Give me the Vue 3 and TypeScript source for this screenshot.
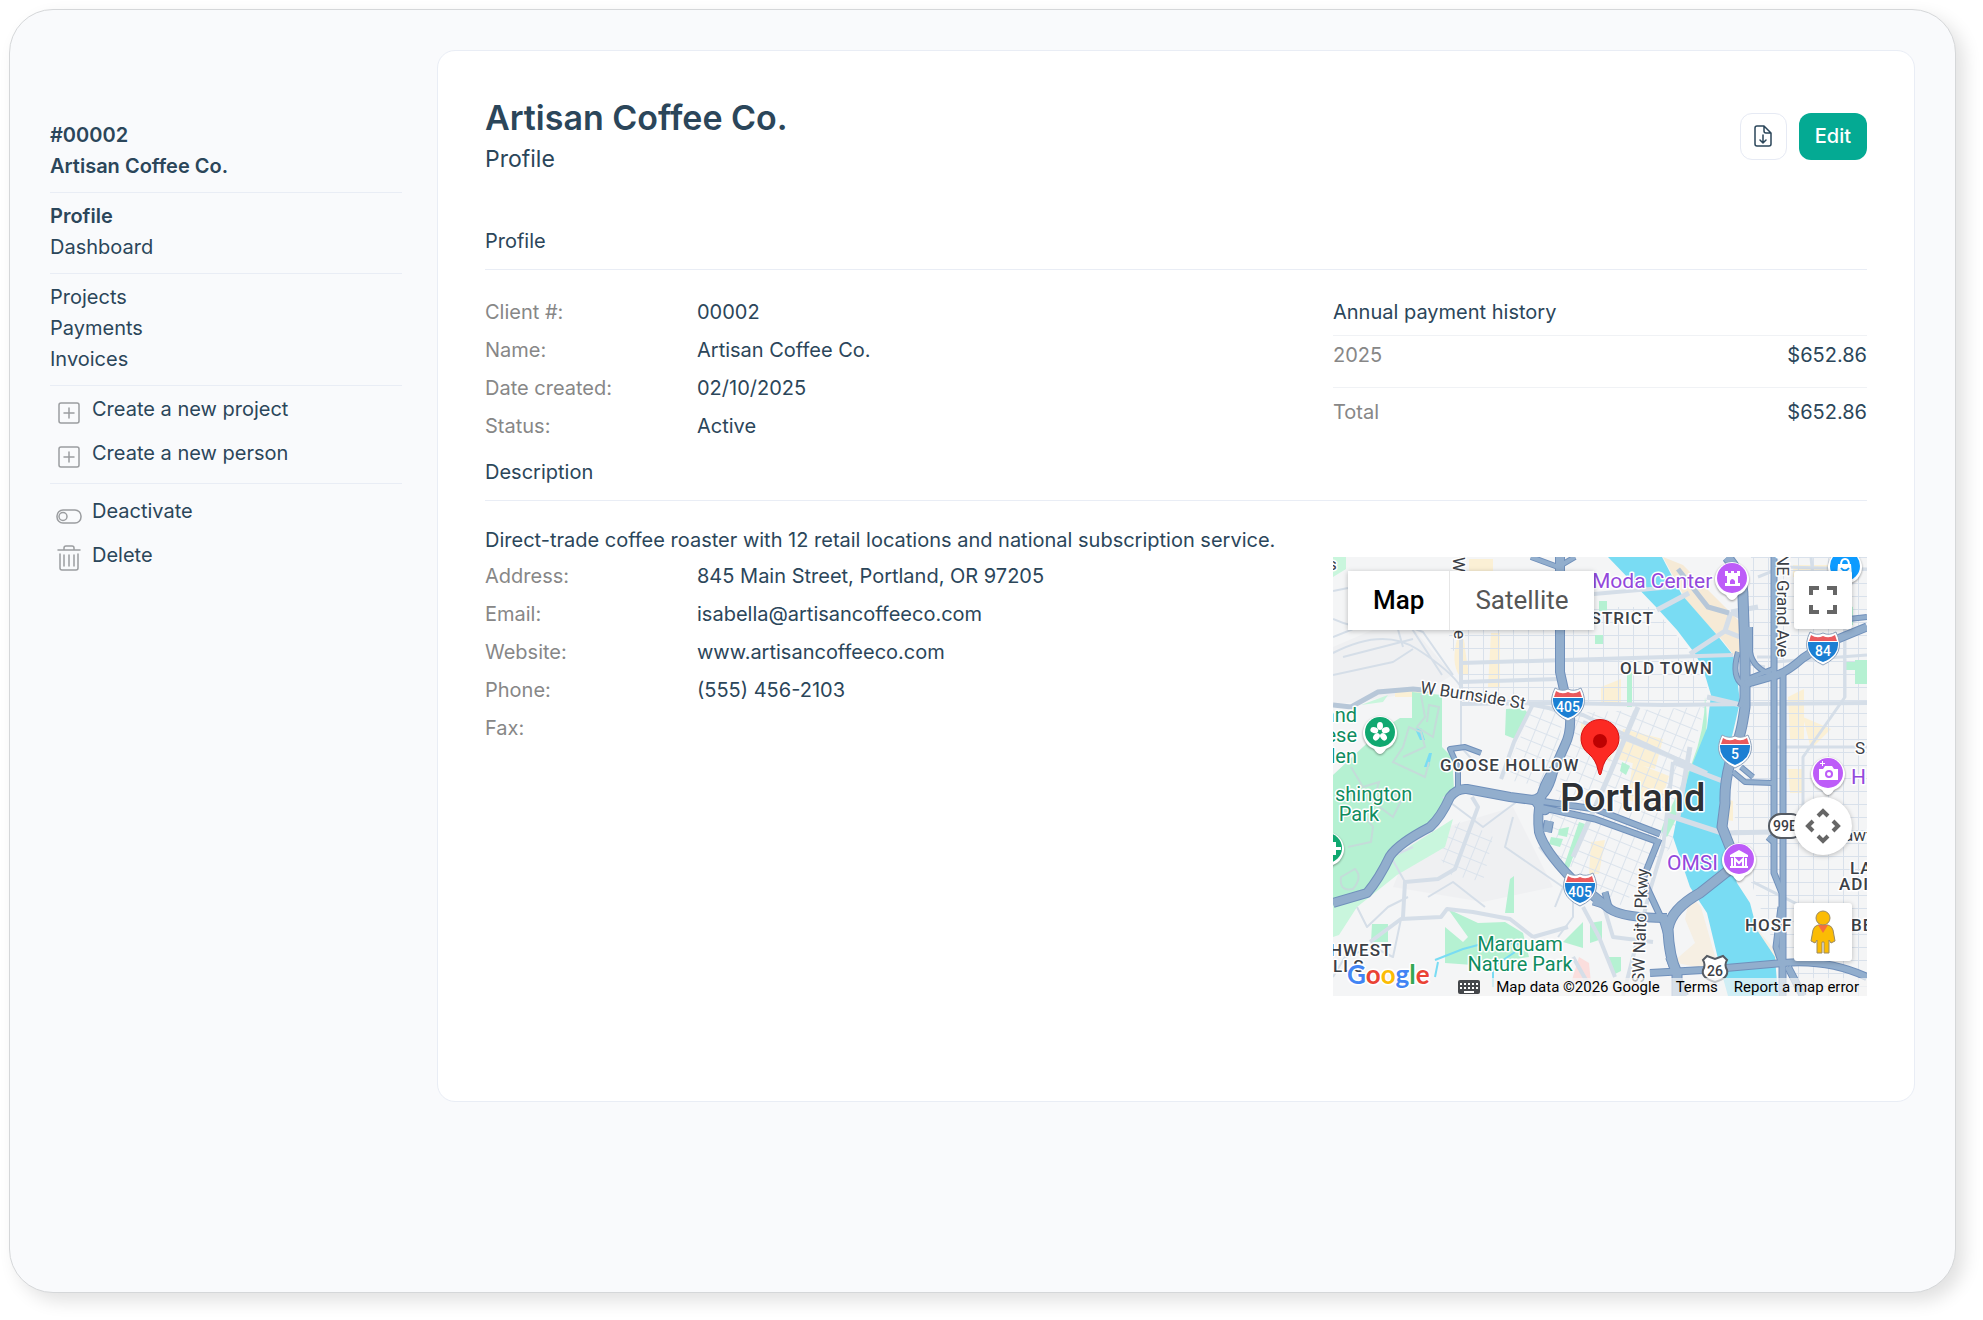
<script setup lang="ts">
interface Field {
  label: string
  value: string
}
interface Road {
  d: string
  w: number
}
interface Label {
  text: string
  x: number
  y: number
  kind: string
  anchor?: 'start' | 'middle' | 'end'
  rotate?: number
}

const profile: Field[] = [
  { label: 'Client #:', value: '00002' },
  { label: 'Name:', value: 'Artisan Coffee Co.' },
  { label: 'Date created:', value: '02/10/2025' },
  { label: 'Status:', value: 'Active' },
]
const contact: Field[] = [
  { label: 'Address:', value: '845 Main Street, Portland, OR 97205' },
  { label: 'Email:', value: 'isabella@artisancoffeeco.com' },
  { label: 'Website:', value: 'www.artisancoffeeco.com' },
  { label: 'Phone:', value: '(555) 456-2103' },
  { label: 'Fax:', value: '' },
]

/* Minor and arterial streets */
const streets: Road[] = [
  { d: 'M0 34L15 31M0 62Q40 80 70 58L109 118M0 96Q50 70 84 92T128 130L128 190L150 215', w: 2 },
  { d: 'M128 0V136M128 106L400 98M128 125L227 122M128 147L227 146L330 148L534 146', w: 4 },
  { d: 'M200 147L181 185L168 222M196 147L250 158L374 216M227 40L340 30', w: 4 },
  { d: 'M324 53L356 36M357 97L392 74L398 55M398 55L412 62L412 82L392 74M398 55L425 50', w: 5 },
  { d: 'M305 150L278 214L240 300M374 140L408 148M340 205L392 225', w: 5 },
  { d: 'M352 205L250 165M340 205L330 290L318 330L290 439', w: 4 },
  { d: 'M334 258L389 276L440 275M357 190L345 260', w: 5 },
  { d: 'M139 240L145 250L122 312L105 322L72 325L70 360M37 385L68 362L108 360L114 352L140 355L177 362L200 380L235 370', w: 4 },
  { d: 'M72 325L58 300L80 290M95 340L120 325L152 350M180 260L172 290L230 330L222 350M206 290L240 330L240 360L225 380', w: 2 },
  { d: 'M0 420L12 400L40 390L60 400L68 362M24 350L34 370L55 350L75 340M110 240L150 270L190 240', w: 2 },
  { d: 'M250 350L266 380L282 420M268 340L280 380L320 385M240 400L262 439', w: 4 },
  { d: 'M478 0L484 60L512 60V140L470 200V260M534 98L440 105M534 190H440', w: 3 },
  { d: 'M424 100L450 100M406 105L432 110M420 325L470 350M425 20L450 10L534 12', w: 3 },
  { d: 'M0 80L50 60L90 75L120 118M10 100L80 82M20 45L60 55L70 90M0 118L60 105L80 92', w: 2 },
]

const motorways: Road[] = [
  { d: 'M0 346L34 336Q46 322 57 299Q66 286 97 270Q108 260 117 240Q124 231 134 232L177 240L200 243Q214 240 220 215L232 188Q238 176 237 160L227 115V0', w: 8 },
  { d: 'M198 0L225 10L242 0M125 231V210L117 192L132 190L148 196', w: 4 },
  { d: 'M200 243L262 252L327 277M206 250L262 262L323 284M200 243Q212 262 216 250', w: 5 },
  { d: 'M220 214Q202 240 206 275Q211 293 238 321L277 352Q290 361 334 361M214 275L216 264', w: 8 },
  { d: 'M394 0Q410 18 410 40L412 95V150Q408 180 402 190Q391 220 392 246L389 270L397 290L405 306L367 336Q338 352 335 372Q336 400 344 416V439', w: 9 },
  { d: 'M417 70V95Q420 112 440 118M407 150L417 121L440 112M405 95Q398 120 410 128', w: 4 },
  { d: 'M412 127L440 119Q452 117 470 101L490 88L534 70', w: 7 },
  { d: 'M441 0V316L449 336V439', w: 5 },
  { d: 'M450 118V439M435 280L441 285M448 350L443 390L450 410', w: 5 },
  { d: 'M326 282L310 322L330 365L336 385M272 335L276 350L260 345', w: 5 },
  { d: 'M317 416L370 413L450 406Q495 402 534 420M455 410L470 439M336 400L352 439', w: 6 },
  { d: 'M400 215L412 225L440 226M408 210L420 220M534 60L516 62', w: 4 },
]

const labels: Label[] = [
  { text: 'Moda Center', x: 259, y: 31, kind: 'poi' },
  { text: 'OMSI', x: 334, y: 313, kind: 'poi' },
  { text: 'H', x: 518, y: 227, kind: 'poi' },
  { text: 'DISTRICT', x: 321, y: 67, kind: 'area', anchor: 'end' },
  { text: 'OLD TOWN', x: 287, y: 117, kind: 'area' },
  { text: 'GOOSE HOLLOW', x: 107, y: 214, kind: 'area' },
  { text: 'HOSF', x: 412, y: 374, kind: 'area' },
  { text: 'BE', x: 518, y: 374, kind: 'area' },
  { text: 'LA', x: 517, y: 317, kind: 'area' },
  { text: 'ADI', x: 506, y: 333, kind: 'area' },
  { text: 'HWEST', x: -3, y: 399, kind: 'area' },
  { text: 'LLS', x: 0, y: 415, kind: 'area' },
  { text: 'S', x: 522, y: 197, kind: 'street' },
  { text: 's', x: -5, y: 13, kind: 'street' },
  { text: 'awf', x: 511, y: 284, kind: 'street' },
  { text: 'and', x: 24, y: 165, kind: 'park', anchor: 'end' },
  { text: 'ese', x: 24, y: 185, kind: 'park', anchor: 'end' },
  { text: 'den', x: 24, y: 206, kind: 'park', anchor: 'end' },
  { text: 'shington', x: 2, y: 244, kind: 'park' },
  { text: 'Park', x: 26, y: 264, kind: 'park', anchor: 'middle' },
  { text: 'Marquam', x: 187, y: 394, kind: 'park', anchor: 'middle' },
  { text: 'Nature Park', x: 187, y: 414, kind: 'park', anchor: 'middle' },
  { text: 'W', x: 120, y: 0, kind: 'street', rotate: 90 },
  { text: 'e', x: 121, y: 73, kind: 'street', rotate: 90 },
  { text: 'NE Grand Ave', x: 444, y: -3, kind: 'street', rotate: 90 },
  { text: 'SW Naito Pkwy', x: 311, y: 426, kind: 'street', rotate: -88 },
  { text: 'Portland', x: 227, y: 254, kind: 'city' },
]

const shields = [
  { n: '405', x: 235, y: 146 },
  { n: '405', x: 247, y: 331 },
  { n: '84', x: 490, y: 90 },
  { n: '5', x: 402, y: 193 },
]
</script>

<template>
  <div class="shell">
    <aside class="sidebar">
      <div class="client">
        <strong>#00002</strong>
        <strong>Artisan Coffee Co.</strong>
      </div>
      <nav class="group">
        <a href="#profile" class="current">Profile</a>
        <a href="#dashboard">Dashboard</a>
      </nav>
      <nav class="group">
        <a href="#projects">Projects</a>
        <a href="#payments">Payments</a>
        <a href="#invoices">Invoices</a>
      </nav>
      <div class="group actions">
        <a v-for="item in ['project', 'person']" :key="item" href="#create" class="action">
          <svg class="icon" viewBox="0 0 26 30" aria-hidden="true">
            <rect x="3" y="6" width="20" height="20" rx="2" />
            <path d="M13 11v10M8 16h10" />
          </svg>
          <span>Create a new {{ item }}</span>
        </a>
      </div>
      <div class="group actions last">
        <button type="button" class="action">
          <svg class="icon" viewBox="0 0 26 30" aria-hidden="true">
            <rect x="1" y="11" width="24" height="13" rx="6" />
            <circle cx="7" cy="17.5" r="4" />
          </svg>
          <span>Deactivate</span>
        </button>
        <button type="button" class="action">
          <svg class="icon" viewBox="0 0 26 30" aria-hidden="true">
            <path d="M2 7h22M8 7V5q0-2 2-2h6q2 0 2 2v2M4 11v14q0 2 2 2h14q2 0 2-2V11M8 12v11M13 12v11M18 12v11" />
          </svg>
          <span>Delete</span>
        </button>
      </div>
    </aside>

    <main class="card">
      <header class="head">
        <div>
          <h1>Artisan Coffee Co.</h1>
          <p class="subtitle">Profile</p>
        </div>
        <div class="tools">
          <button type="button" class="btn export" aria-label="Download">
            <svg viewBox="0 0 18 22" width="18" height="22" aria-hidden="true">
              <path d="M10 1H3q-2 0-2 2v16q0 2 2 2h12q2 0 2-2V8L10 1v5q0 2 2 2h5M9 10v8M6 15l3 3 3-3" />
            </svg>
          </button>
          <button type="button" class="btn edit">Edit</button>
        </div>
      </header>

      <h2 class="first">Profile</h2>
      <div class="columns">
        <dl>
          <div v-for="f in profile" :key="f.label" class="row">
            <dt>{{ f.label }}</dt>
            <dd>{{ f.value }}</dd>
          </div>
        </dl>
        <table>
          <caption>Annual payment history</caption>
          <tbody>
            <tr class="year"><th scope="row">2025</th><td>$652.86</td></tr>
            <tr class="total"><th scope="row">Total</th><td>$652.86</td></tr>
          </tbody>
        </table>
      </div>

      <h2>Description</h2>
      <p class="description">Direct-trade coffee roaster with 12 retail locations and national subscription service.</p>
      <div class="columns">
        <dl>
          <div v-for="f in contact" :key="f.label" class="row">
            <dt>{{ f.label }}</dt>
            <dd>{{ f.value }}</dd>
          </div>
        </dl>

        <section class="map" aria-label="Map of Portland">
          <svg class="tiles" viewBox="0 0 534 439" preserveAspectRatio="xMidYMid slice">
            <defs>
              <pattern id="blocks" width="15" height="13" patternUnits="userSpaceOnUse">
                <path d="M0 0H15M0 0V13" stroke="#d9e1eb" stroke-width="2" />
              </pattern>
              <pattern id="tilted" width="12" height="12" patternUnits="userSpaceOnUse" patternTransform="rotate(22)">
                <path d="M0 0H12M0 0V12" stroke="#dbe3ec" stroke-width="2" />
              </pattern>
              <path id="burnside" d="M87 136Q130 142 190 152" />
            </defs>

            <rect width="534" height="439" fill="#f4f5f6" />
            <path d="M0 90L70 60L120 118L90 135L0 148ZM80 280L180 250L220 330L150 345L60 330Z" fill="#eff0f2" />

            <g fill="#fbf0d5">
              <path d="M136 2h24v24h-24zM124 82q8-6 8 10l4 26h-10q-8-12-2-36zM158 76h9v54h-12zM62 132h34v8h-34z" />
              <path d="M268 130l20-8v26h-20zM248 165l34 18-5 22-30-14zM290 172l40 10-8 30-38-10zM300 205l36 14-10 32-32-8zM258 285l14-2-6 34h-10z" />
              <path d="M455 140l16-8v50h-14zM470 160l28 12-20 20zM455 212h16v24h-14zM460 8h60v12h-60zM386 240l14 4v20l-12-2z" />
            </g>
            <path d="M330 0L350 8L410 68V110L390 84L354 45Z" fill="#f6ead6" />
            <path d="M357 338L368 350L388 420L372 412L340 405L362 386L352 362ZM424 372L446 398V410L428 395Z" fill="#f6efe3" />
            <path d="M246 400l10 6 2 20h-20z" fill="#fbdedd" />

            <path d="M116 60H226V146H128V100L116 90Z" fill="url(#blocks)" />
            <path d="M232 50H320L360 98L374 125V148H232Z" fill="url(#blocks)" />
            <path d="M418 0H534V439H460L416 320L400 280L412 150Z" fill="url(#blocks)" />
            <path d="M240 156L372 150L352 220L338 290L310 320L290 350L225 300L212 260L230 215Z" fill="url(#tilted)" />
            <path d="M200 150H232L225 190L212 230L170 222Z" fill="url(#tilted)" />
            <path d="M130 262L160 280L150 325L118 318L100 290Z" fill="url(#tilted)" />

            <g fill="#c9f6dd">
              <path d="M0 346L34 336L60 300L120 262L112 290L64 318L24 350L6 378L0 380Z" />
              <path d="M0 0H13V12L0 20ZM28 148L55 138L50 145Z" />
            </g>
            <g fill="#b5f1d2">
              <path d="M0 218L30 190L52 170L67 161H79V135L109 138V190L119 200L121 232L97 266L57 295L34 332L0 342Z" />
              <path d="M173 152L190 151L196 157L182 182L172 178ZM177 322l4-3v37h-9zM39 367h16v18h-17zM115 352L145 366L172 365L190 376L196 400L140 408L112 406V370L130 385L135 380Z" />
              <path d="M372 140Q378 180 364 212L354 230L344 260L334 280L328 274L332 262L352 222Q372 180 372 140ZM266 44h8v10h-8zM294 110h5v40h-5zM262 78h8v9h-8zM289 205l8 4-4 9-6-4zM226 272l10-2-2 10-9-2zM218 280l12 2-3 8-11-3zM246 265l6 2-16 44-5-2z" />
              <path d="M522 103h12v24h-12zM513 105h9v8h-9zM506 44l14 6v18h-10zM257 366l12-2v18l-12 4zM274 400l14 0 0 14-8 4zM250 365l-20 20 20 6z" />
            </g>
            <path d="M82 172l6-1 4 12-5 0zM96 196l3 0-3 14-5 0z" fill="#79dcf3" />
            <path d="M102 420L105 405M102 403L130 392L160 384L190 388M182 395L160 410V430" fill="none" stroke="#79dcf3" stroke-width="2" />
            <g fill="none" stroke="#c4dcd9" stroke-width="2">
              <path d="M88 138L92 160L84 170L100 180L106 150L96 148L94 165M70 200L92 190L88 175L76 170L70 190L60 205L92 220L96 205" />
              <path d="M18 210L30 230L46 225L40 245L60 260L70 240L55 235M15 290L38 285L40 270L32 260M8 320Q6 335 20 332Q30 320 22 312Z" />
            </g>

            <path
              d="M275 0H329L349 38L384 78L400 98L404 121L407 145L400 175L390 215L385 263L389 280L404 326L417 346L424 373L442 400L445 439H395L387 410L374 356L357 330L340 280L344 260L357 213L374 171L378 138L372 118L363 98L344 73L324 51Z"
              fill="#79dcf3"
            />

            <g fill="none" stroke="#d5dee8" stroke-linejoin="round">
              <path v-for="s in streets" :key="s.d" :d="s.d" :stroke-width="s.w" />
            </g>
            <path d="M0 148L18 150L45 135L80 132L100 134M345 12L375 50L396 56" fill="none" stroke="#b7c7d8" stroke-width="5" />
            <g fill="none" stroke="#7090bb" stroke-linejoin="round">
              <path v-for="r in motorways" :key="r.d" :d="r.d" :stroke-width="r.w + 2" />
            </g>
            <g fill="none" stroke="#92aecd" stroke-linejoin="round">
              <path v-for="r in motorways" :key="r.d" :d="r.d" :stroke-width="r.w" />
            </g>

            <g v-for="s in shields" :key="s.x" :transform="`translate(${s.x} ${s.y})`">
              <path d="M-13-15Q-6-11 0-14Q6-11 13-15Q24 7 0 18Q-24 7-13-15Z" fill="#fff" stroke="#8ea3bd" />
              <path d="M-15-5Q-16 9 0 15Q16 9 15-5Z" fill="#1b7fd3" />
              <path d="M-12-12Q-6-8 0-11Q6-8 12-12L14-6H-14Z" fill="#ea5a5e" />
              <text class="shield" y="9" text-anchor="middle">{{ s.n }}</text>
            </g>
            <rect x="436" y="257" width="34" height="24" rx="12" fill="#fff" stroke="#555b63" stroke-width="2" />
            <text x="440" y="274" class="route">99E</text>
            <path d="M370 403l4-4 8 3 8-3 4 4q-3 5 0 10 2 8-12 12-14-4-12-12 3-5 0-10z" fill="#fff" stroke="#555b63" stroke-width="2" />
            <text x="382" y="419" class="route" text-anchor="middle">26</text>

            <text
              v-for="l in labels"
              :key="l.text + l.x"
              :class="l.kind"
              :text-anchor="l.anchor ?? 'start'"
              :transform="`translate(${l.x} ${l.y}) rotate(${l.rotate ?? 0})`"
            >{{ l.text }}</text>
            <text class="street"><textPath href="#burnside">W Burnside St</textPath></text>

            <g v-for="p in [
              { x: 399, y: 21, c: '#bd5cf8' },
              { x: 512, y: 9, c: '#0d9bff' },
              { x: 406, y: 302, c: '#bd5cf8' },
              { x: 495, y: 216, c: '#bd5cf8' },
              { x: 47, y: 175, c: '#10a870' },
              { x: -6, y: 291, c: '#10a870' },
            ]" :key="p.x" :transform="`translate(${p.x} ${p.y})`">
              <path class="pin" d="M0 22Q-3 22-6 17A17 17 0 1 1 6 17Q3 22 0 22Z" />
              <circle r="15" :fill="p.c" />
            </g>
            <g fill="#fff">
              <path d="M392 14h3v2h3v-2h3v2h3v-2h3v5h-2v7h2v3h-15v-3h2v-7h-2zM397 27h5v-3q-3-4-5 0z" fill-rule="evenodd" />
              <path d="M397 298l9-5 9 5v2h-18zM398 301h2v8h-2zM412 301h2v8h-2zM397 309h18v2h-18z" />
              <path d="M402 309v-7l4 4 4-4v7" fill="none" stroke="#fff" stroke-width="2" />
              <path d="M486 212h4l2-3h7l2 3h4v11h-19zM487 206h2v-2h1v2h2v1h-2v2h-1v-2h-2z" />
              <circle cx="496" cy="217" r="4" fill="#bd5cf8" />
              <circle cx="496" cy="217" r="2" />
              <path d="M505 7h13l1 12h-15z" />
              <path d="M508 8q0-6 4-6t4 6" fill="none" stroke="#fff" stroke-width="2" />
              <path d="M508 11q4 5 8 0" fill="none" stroke="#0d9bff" stroke-width="2" />
              <ellipse v-for="a in [0, 72, 144, 216, 288]" :key="a" cx="47" cy="169" rx="3" ry="4" :transform="`rotate(${a} 47 175)`" />
              <path d="M-2 285h5v5H8v3H3v5h-5z" />
            </g>

            <path d="M267 218Q266 218 265 213Q263 203 256 197A19 19 0 1 1 278 197Q271 203 269 213Q268 218 267 218Z" fill="#fc2a23" stroke="#d41212" />
            <circle cx="267" cy="184" r="7" fill="#bd0202" />

            <text class="logo" x="14" y="427"><tspan fill="#4285f4">G</tspan><tspan fill="#ea4335">o</tspan><tspan fill="#fbbc05">o</tspan><tspan fill="#4285f4">g</tspan><tspan fill="#34a853">l</tspan><tspan fill="#ea4335">e</tspan></text>
          </svg>

          <div class="types">
            <button type="button" class="on">Map</button>
            <button type="button">Satellite</button>
          </div>
          <button type="button" class="control full" aria-label="Toggle fullscreen view">
            <svg viewBox="0 0 28 28" width="28" height="28" aria-hidden="true">
              <path d="M2 9V2h8M18 2h8v7M26 19v7h-8M10 26H2v-7" fill="none" stroke="#666" stroke-width="4" />
            </svg>
          </button>
          <button type="button" class="control pan" aria-label="Map camera controls">
            <svg viewBox="0 0 36 36" width="36" height="36" aria-hidden="true">
              <path d="M13 8l5-5 5 5M13 28l5 5 5-5M8 13l-5 5 5 5M28 13l5 5-5 5" fill="none" stroke="#666" stroke-width="4" />
            </svg>
          </button>
          <button type="button" class="control pegman" aria-label="Street View pegman">
            <svg viewBox="0 0 26 44" width="26" height="44" aria-hidden="true">
              <path d="M8 15Q4 16 3 20L1 31l4 2 2-3v13h5V32h2v11h5V30l2 3 4-2-2-11q-1-4-5-5z" fill="#fbbc04" stroke="#9b8a62" />
              <path d="M8 15h10l-5 8z" fill="#f76f3c" />
              <circle cx="13" cy="8" r="7" fill="#fbbc04" stroke="#9b8a62" />
            </svg>
          </button>
          <footer class="credits">
            <button type="button" class="keys" aria-label="Keyboard shortcuts">
              <svg viewBox="0 0 22 14" width="22" height="14" aria-hidden="true">
                <rect width="22" height="14" rx="2" fill="#44474b" />
                <path d="M2 4h18M2 8h18" stroke="#fff" stroke-width="2" stroke-dasharray="2 2" />
                <path d="M6 12h10" stroke="#fff" stroke-width="2" />
              </svg>
            </button>
            <span>Map data ©2026 Google</span>
            <a href="#terms">Terms</a>
            <a href="#report">Report a map error</a>
          </footer>
        </section>
      </div>
    </main>
  </div>
</template>

<style>
body {
  margin: 0;
  background: #fff;
}
</style>

<style scoped>
.shell {
  box-sizing: border-box;
  display: flex;
  align-items: flex-start;
  gap: 35px;
  min-height: calc(100vh - 36px);
  margin: 9px 27px 27px 9px;
  padding: 40px;
  border: 1px solid #d5d7d9;
  border-radius: 44px;
  background: #f9fafc;
  box-shadow: 8px 8px 18px rgba(0, 0, 0, 0.12);
  color: #2b465a;
  font-family: Inter, "Liberation Sans", sans-serif;
  font-size: 20px;
  line-height: 31px;
}
h1, h2, p, dl, dd {
  margin: 0;
}
a {
  color: inherit;
  text-decoration: none;
}
button {
  margin: 0;
  padding: 0;
  border: 0;
  background: none;
  color: inherit;
  font: inherit;
  cursor: pointer;
}
.sidebar {
  flex: 0 0 352px;
  padding-top: 70px;
}
.client,
.group {
  display: flex;
  flex-direction: column;
  padding-bottom: 10px;
  border-bottom: 1px solid #e9edf5;
}
.client strong,
.current {
  font-weight: 600;
}
.group {
  padding-top: 8px;
}
.actions {
  gap: 13px;
  padding-bottom: 14px;
}
.last {
  padding-top: 12px;
  border-bottom: 0;
}
.action {
  display: flex;
  gap: 10px;
  height: 31px;
  padding-left: 6px;
  text-align: left;
}
.icon {
  flex: none;
  width: 26px;
  height: 30px;
  margin-top: 3px;
  fill: none;
  stroke: #9b9da0;
  stroke-width: 1.5;
  stroke-linecap: round;
}
.card {
  flex: 1;
  min-width: 0;
  padding: 47px 47px 105px;
  border: 1px solid #e9edf5;
  border-radius: 18px;
  background: #fff;
}
.head {
  display: flex;
  justify-content: space-between;
  align-items: center;
}
h1 {
  font-size: 34px;
  font-weight: 600;
  line-height: 40px;
}
.subtitle {
  margin-top: 6px;
  font-size: 23px;
  line-height: 30px;
}
.tools {
  display: flex;
  gap: 12px;
}
.btn {
  box-sizing: border-box;
  display: grid;
  place-items: center;
  height: 47px;
  border-radius: 12px;
}
.export {
  width: 47px;
  border: 1px solid #e6eaf4;
}
.export svg {
  fill: none;
  stroke: #2b465a;
  stroke-width: 1.5;
  stroke-linecap: round;
  stroke-linejoin: round;
}
.edit {
  padding: 0 16px;
  background: #04aa93;
  color: #fff;
  font-weight: 500;
}
h2 {
  margin: 8px 0 23px;
  padding-bottom: 9px;
  border-bottom: 1px solid #e9edf5;
  font-size: 20px;
  font-weight: 400;
  line-height: 38px;
}
h2.first {
  margin-top: 48px;
}
.columns {
  display: grid;
  grid-template-columns: minmax(0, 848fr) minmax(0, 534fr);
  align-items: start;
}
.row {
  display: grid;
  grid-template-columns: 212px 1fr;
  line-height: 38px;
}
dt,
th {
  color: #878787;
}
.description {
  line-height: 33px;
}
table {
  width: 100%;
  border-collapse: collapse;
  line-height: 38px;
}
caption {
  padding-bottom: 4px;
  text-align: left;
}
th,
td {
  padding: 0;
  border-top: 1px solid #f0f2f5;
  font-weight: 400;
  text-align: left;
}
td {
  text-align: right;
}
.year th,
.year td {
  padding-bottom: 13px;
}
.total th,
.total td {
  padding-top: 5px;
}
.map {
  position: relative;
  height: 439px;
  overflow: hidden;
  color: #000;
  font-family: Roboto, sans-serif;
}
.tiles {
  display: block;
  width: 100%;
  height: 100%;
}
.tiles text {
  paint-order: stroke;
  stroke: #fff;
  stroke-width: 3px;
  stroke-linejoin: round;
  font-size: 17px;
  font-weight: 500;
  fill: #3b4046;
}
.tiles .area {
  font-size: 17px;
  letter-spacing: 1px;
}
.tiles .poi {
  font-size: 21px;
  font-weight: 400;
  fill: #9248dc;
}
.tiles .park {
  font-size: 20px;
  font-weight: 400;
  fill: #0f8c60;
}
.tiles .street {
  font-size: 17px;
  font-weight: 400;
}
.tiles .city {
  font-size: 38px;
  fill: #2d3034;
}
.tiles .shield,
.tiles .route {
  stroke: none;
  font-size: 14px;
}
.tiles .shield {
  fill: #fff;
}
.tiles .logo {
  font-family: Lato, sans-serif;
  font-size: 26px;
  font-weight: 700;
}
.pin {
  fill: #fff;
  filter: drop-shadow(0 1px 1px rgba(0, 0, 0, 0.4));
}
.types {
  position: absolute;
  top: 14px;
  left: 15px;
  display: flex;
  box-shadow: 0 1px 5px rgba(0, 0, 0, 0.25);
}
.types button {
  height: 59px;
  padding: 0 25px;
  background: #fff;
  color: #565656;
  font-size: 26px;
}
.types .on {
  border-right: 1px solid #e6e6e6;
  color: #000;
  font-weight: 500;
}
.control {
  position: absolute;
  right: 15px;
  display: grid;
  place-items: center;
  width: 58px;
  height: 58px;
  border-radius: 3px;
  background: #fff;
  box-shadow: 0 1px 5px rgba(0, 0, 0, 0.25);
}
.full {
  top: 14px;
}
.pan {
  bottom: 141px;
  border-radius: 50%;
}
.pegman {
  bottom: 35px;
}
.credits {
  position: absolute;
  right: 0;
  bottom: 0;
  display: flex;
  align-items: center;
  gap: 16px;
  padding: 0 8px 0 2px;
  background: rgba(245, 245, 245, 0.7);
  font-size: 15px;
  line-height: 18px;
}
.keys {
  display: flex;
}
</style>
